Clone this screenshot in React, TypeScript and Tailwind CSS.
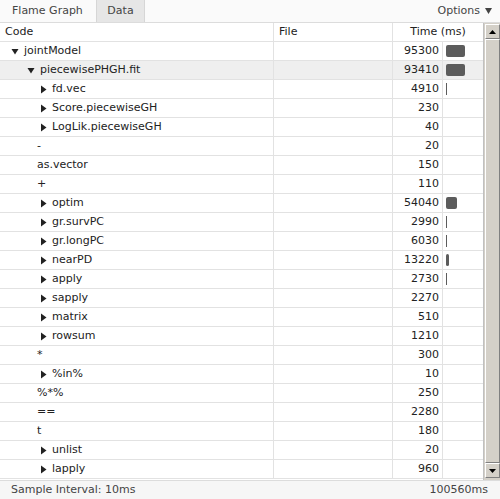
import React from "react";

type Row = { name: string; level: number; kind: "open" | "closed" | "leaf"; time: number; hl?: boolean };

const rows: Row[] = [
  { name: "jointModel", level: 0, kind: "open", time: 95300 },
  { name: "piecewisePHGH.fit", level: 1, kind: "open", time: 93410, hl: true },
  { name: "fd.vec", level: 2, kind: "closed", time: 4910 },
  { name: "Score.piecewiseGH", level: 2, kind: "closed", time: 230 },
  { name: "LogLik.piecewiseGH", level: 2, kind: "closed", time: 40 },
  { name: "-", level: 2, kind: "leaf", time: 20 },
  { name: "as.vector", level: 2, kind: "leaf", time: 150 },
  { name: "+", level: 2, kind: "leaf", time: 110 },
  { name: "optim", level: 2, kind: "closed", time: 54040 },
  { name: "gr.survPC", level: 2, kind: "closed", time: 2990 },
  { name: "gr.longPC", level: 2, kind: "closed", time: 6030 },
  { name: "nearPD", level: 2, kind: "closed", time: 13220 },
  { name: "apply", level: 2, kind: "closed", time: 2730 },
  { name: "sapply", level: 2, kind: "closed", time: 2270 },
  { name: "matrix", level: 2, kind: "closed", time: 510 },
  { name: "rowsum", level: 2, kind: "closed", time: 1210 },
  { name: "*", level: 2, kind: "leaf", time: 300 },
  { name: "%in%", level: 2, kind: "closed", time: 10 },
  { name: "%*%", level: 2, kind: "leaf", time: 250 },
  { name: "==", level: 2, kind: "leaf", time: 2280 },
  { name: "t", level: 2, kind: "leaf", time: 180 },
  { name: "unlist", level: 2, kind: "closed", time: 20 },
  { name: "lapply", level: 2, kind: "closed", time: 960 },
];

const TOTAL = 100560;

function Down() {
  return (
    <svg width="8" height="7" viewBox="0 0 8 7" className="shrink-0">
      <polygon points="0.5,1 7.5,1 4,6.5" fill="#222" />
    </svg>
  );
}
function Right() {
  return (
    <svg width="7" height="9" viewBox="0 0 7 9" className="shrink-0">
      <polygon points="1,0.5 6.5,4.5 1,8.5" fill="#222" />
    </svg>
  );
}

function CodeCell({ r }: { r: Row }) {
  if (r.kind === "leaf") {
    return <div className="flex items-center h-full pl-[37px]">{r.name}</div>;
  }
  const pl = r.level === 0 ? "pl-[11px]" : r.level === 1 ? "pl-[27px]" : "pl-[40px]";
  return (
    <div className={`flex items-center h-full gap-[5px] ${pl}`}>
      {r.kind === "open" ? <Down /> : <Right />}
      <span>{r.name}</span>
    </div>
  );
}

function Arrow({ up }: { up: boolean }) {
  return (
    <div className="w-[15px] h-[15px] bg-[#d4d0c8] border border-t-white border-l-white border-r-[#808080] border-b-[#808080] flex items-center justify-center shrink-0">
      <svg width="7" height="4" viewBox="0 0 7 4">
        {up ? <polygon points="0,4 7,4 3.5,0" fill="#000" /> : <polygon points="0,0 7,0 3.5,4" fill="#000" />}
      </svg>
    </div>
  );
}

export default function App() {
  return (
    <div
      className="w-[500px] h-[499px] flex flex-col bg-white text-[11px] text-[#222] overflow-hidden"
      style={{ fontFamily: '"DejaVu Sans", Verdana, sans-serif' }}
    >
      {/* tabs */}
      <div className="h-[23px] flex items-stretch border-b border-[#dcdcdc] bg-[#fafafa] text-[#444] shrink-0">
        <div className="w-[96px] flex items-center pl-[12px]">Flame Graph</div>
        <div className="w-[49px] flex items-center justify-center bg-[#e6e6e6] border-x border-[#d6d6d6]">Data</div>
        <div className="flex-1" />
        <div className="flex items-center pr-[8px] gap-[5px]">
          <span>Options</span>
          <svg width="7" height="6" viewBox="0 0 7 6">
            <polygon points="0,0 7,0 3.5,6" fill="#444" />
          </svg>
        </div>
      </div>

      {/* table + scrollbar */}
      <div className="flex flex-1 min-h-0">
        <div className="w-[483px] flex flex-col min-h-0">
          <div className="h-[19px] grid grid-cols-[274px_119px_90px] border-b border-[#e2e2e2] shrink-0">
            <div className="flex items-center pl-[5px] border-r border-[#e2e2e2]">Code</div>
            <div className="flex items-center pl-[5px] border-r border-[#e2e2e2]">File</div>
            <div className="flex items-center justify-center">Time (ms)</div>
          </div>
          <div className="flex-1 min-h-0 overflow-hidden">
            {rows.map((r, i) => {
              const w = Math.round((r.time / TOTAL) * 20);
              return (
                <div
                  key={i}
                  className={`h-[19px] grid grid-cols-[274px_119px_50px_40px] border-b border-[#e2e2e2] ${r.hl ? "bg-[#efefef]" : ""}`}
                >
                  <div className="border-r border-[#e2e2e2] min-w-0">
                    <CodeCell r={r} />
                  </div>
                  <div className="border-r border-[#e2e2e2]" />
                  <div className="border-r border-[#e2e2e2] flex items-center justify-end pr-[3px]">{r.time}</div>
                  <div className="flex items-center pl-[3px]">
                    {w > 0 && (
                      <div
                        className={`h-[12px] bg-[#5c5c5c] ${w > 2 ? "rounded-[2px]" : ""}`}
                        style={{ width: `${w}px` }}
                      />
                    )}
                  </div>
                </div>
              );
            })}
          </div>
        </div>
        <div className="w-[17px] bg-[#d4d0c8] flex flex-col items-center border-l border-[#c0c0c0] pt-[1px] pb-[2px]">
          <Arrow up />
          <div className="flex-1 w-[15px] bg-[#d4d0c8] border border-t-white border-l-white border-r-[#808080] border-b-[#808080]" />
          <Arrow up={false} />
        </div>
      </div>

      {/* footer */}
      <div className="h-[19px] shrink-0 flex items-center justify-between border-t border-[#dcdcdc] bg-[#f6f6f6] text-[#444] pl-[11px] pr-[12px]">
        <span>Sample Interval: 10ms</span>
        <span>100560ms</span>
      </div>
    </div>
  );
}
